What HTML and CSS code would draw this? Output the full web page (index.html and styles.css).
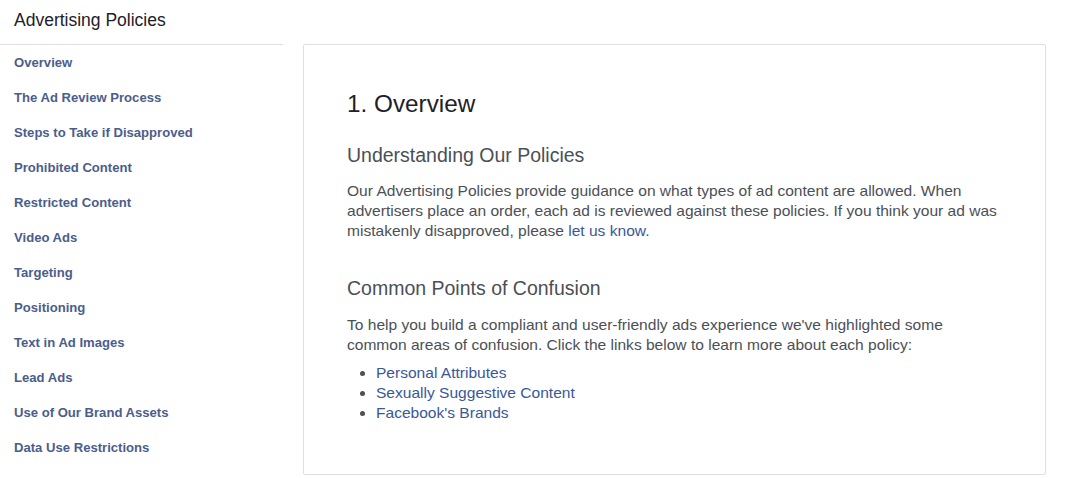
FILE: index.html
```html
<!DOCTYPE html>
<html>
<head>
<meta charset="utf-8">
<link rel="stylesheet" href="styles.css">
</head>
<body>
<div class="page">
  <aside class="sidebar">
    <div class="brand">Advertising Policies</div>
    <nav class="nav">
      <a href="#">Overview</a>
      <a href="#">The Ad Review Process</a>
      <a href="#">Steps to Take if Disapproved</a>
      <a href="#">Prohibited Content</a>
      <a href="#">Restricted Content</a>
      <a href="#">Video Ads</a>
      <a href="#">Targeting</a>
      <a href="#">Positioning</a>
      <a href="#">Text in Ad Images</a>
      <a href="#">Lead Ads</a>
      <a href="#">Use of Our Brand Assets</a>
      <a href="#">Data Use Restrictions</a>
    </nav>
  </aside>
  <main class="main">
    <section class="card">
      <h1 class="title">1. Overview</h1>
      <h2 class="subtitle">Understanding Our Policies</h2>
      <p class="text">Our Advertising Policies provide guidance on what types of ad content are allowed. When advertisers place an order, each ad is reviewed against these policies. If you think your ad was mistakenly disapproved, please <a href="#" class="link">let us know</a>.</p>
      <h2 class="subtitle second">Common Points of Confusion</h2>
      <p class="text text-second">To help you build a compliant and user-friendly ads experience we've highlighted some common areas of confusion. Click the links below to learn more about each policy:</p>
      <ul class="list">
        <li><a href="#" class="link">Personal Attributes</a></li>
        <li><a href="#" class="link">Sexually Suggestive Content</a></li>
        <li><a href="#" class="link">Facebook's Brands</a></li>
      </ul>
    </section>
  </main>
</div>
</body>
</html>
```

FILE: styles.css
```css
* { box-sizing: border-box; }
html, body { margin: 0; padding: 0; background: #fff; }
body {
  font-family: "Liberation Sans", Arial, sans-serif;
  color: #4b4f56;
}
.page {
  display: flex;
  gap: 20px;
  width: 1077px;
}
.sidebar {
  width: 283px;
  flex: none;
}
.brand {
  height: 45px;
  border-bottom: 1px solid #dddfe2;
  padding-left: 14px;
  font-size: 17.5px;
  line-height: 40px;
  color: #1d2129;
}
.nav {
  display: flex;
  flex-direction: column;
  padding-left: 14px;
}
.nav a {
  display: block;
  line-height: 35px;
  font-size: 13.1px;
  font-weight: bold;
  color: #4b5d8c;
  text-decoration: none;
}
.main {
  flex: none;
  width: 743px;
  padding-top: 44px;
}
.card {
  height: 431px;
  border: 1px solid #dddfe2;
  border-radius: 2px;
  padding: 44px 40px 0 43px;
}
.title {
  margin: 0;
  font-size: 24.3px;
  line-height: 30px;
  font-weight: normal;
  color: #1d2129;
}
.subtitle {
  margin: 24px 0 0;
  font-size: 19.5px;
  line-height: 24px;
  font-weight: normal;
  color: #4b4f56;
}
.subtitle.second { margin-top: 35px; }
.text {
  margin: 14px 0 0;
  font-size: 15.55px;
  line-height: 20px;
}
.text.text-second { margin-top: 15px; }
.link {
  color: #385898;
  text-decoration: none;
}
.list {
  margin: 8px 0 0;
  padding-left: 29px;
  font-size: 15.55px;
  line-height: 20px;
}
```
